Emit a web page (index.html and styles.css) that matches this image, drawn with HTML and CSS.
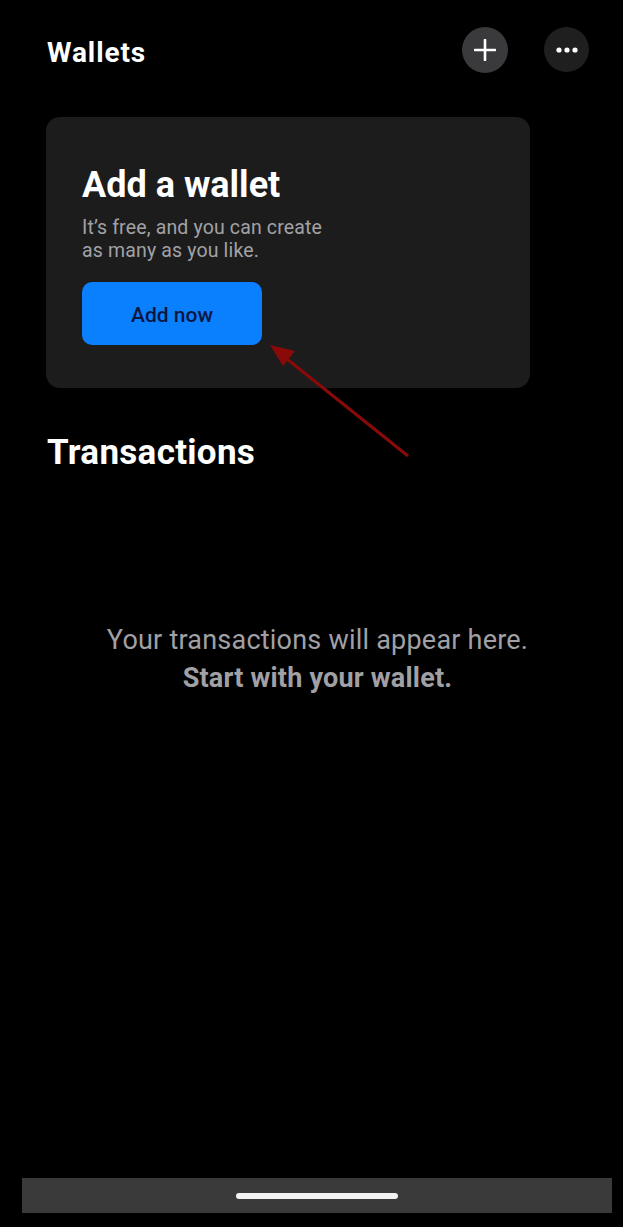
FILE: index.html
```html
<!DOCTYPE html>
<html>
<head>
<meta charset="utf-8">
<link rel="stylesheet" href="styles.css">
</head>
<body>
<div class="screen">
  <header class="topbar">
    <h1 class="title">Wallets</h1>
    <div class="actions">
      <button class="circle circle-add" aria-label="Add">
        <svg width="22" height="22" viewBox="0 0 22 22"><path d="M11 1v20M1 11h20" stroke="#fff" stroke-width="2.6" stroke-linecap="round"/></svg>
      </button>
      <button class="circle circle-more" aria-label="More">
        <svg width="22" height="6" viewBox="0 0 22 6"><circle cx="3" cy="3" r="2.6" fill="#fff"/><circle cx="11" cy="3" r="2.6" fill="#fff"/><circle cx="19" cy="3" r="2.6" fill="#fff"/></svg>
      </button>
    </div>
  </header>

  <section class="card">
    <h2 class="card-title">Add a wallet</h2>
    <p class="card-text">It’s free, and you can create<br>as many as you like.</p>
    <button class="add-btn">Add now</button>
  </section>

  <h2 class="section-title">Transactions</h2>

  <div class="empty">
    <p class="empty-line">Your transactions will appear here.</p>
    <p class="empty-line strong">Start with your wallet.</p>
  </div>

  <div class="navbar"><div class="home-indicator"></div></div>

  <svg class="arrow" width="623" height="1227" viewBox="0 0 623 1227">
    <line x1="408" y1="456" x2="282" y2="355" stroke="#8a0a0a" stroke-width="3"/>
    <polygon points="270,345 295,351 283,366" fill="#8a0a0a"/>
  </svg>
</div>
</body>
</html>
```
FILE: styles.css
```css
* { box-sizing: border-box; }
html, body { margin: 0; padding: 0; background: #000; }
body { font-family: Roboto, "Noto Sans", "Liberation Sans", sans-serif; color: #fff; }
.screen { position: relative; width: 623px; height: 1227px; display: flex; flex-direction: column; overflow: hidden; }
.topbar { display: flex; align-items: center; justify-content: space-between; height: 46px; margin-top: 27px; padding: 0 34px 0 47px; }
.title { margin: 4px 0 0; font-size: 28px; font-weight: 700; letter-spacing: 0.9px; }
.actions { display: flex; gap: 36px; }
.circle { width: 46px; height: 46px; border-radius: 50%; border: 0; padding: 0; display: flex; align-items: center; justify-content: center; }
.circle-add { background: #3a3a3c; }
.circle-more { background: #1f1f1f; width: 45px; height: 45px; }
.card { margin: 44px 0 0 46px; width: 484px; height: 271px; background: #1c1c1d; border-radius: 14px; padding: 47px 36px 0; }
.card-title { margin: 0; font-size: 36px; line-height: 42px; font-weight: 700; }
.card-text { margin: 10px 0 0; font-size: 19.5px; line-height: 23px; color: #a2a2a6; letter-spacing: 0.15px; }
.add-btn { margin-top: 20px; width: 180px; height: 63px; border: 0; border-radius: 10px; background: #0a80ff; color: #0a1640; font-family: inherit; font-size: 21px; font-weight: 500; display: flex; align-items: center; justify-content: center; padding: 3px 0 0; }
.section-title { margin: 45px 0 0 47px; font-size: 35px; line-height: 40px; font-weight: 700; letter-spacing: 0.3px; }
.empty { margin-top: 148px; padding-left: 12px; text-align: center; }
.empty-line { margin: 0; font-size: 27px; line-height: 38px; color: #a0a0a5; letter-spacing: 0.22px; }
.empty-line.strong { font-weight: 700; letter-spacing: 0.2px; }
.navbar { margin: auto 11px 14px 22px; height: 35px; background: #3a3a3a; display: flex; align-items: center; justify-content: center; }
.home-indicator { width: 162px; height: 6px; background: #f2f2f2; border-radius: 3px; }
.arrow { position: absolute; left: 0; top: 0; pointer-events: none; }
```
